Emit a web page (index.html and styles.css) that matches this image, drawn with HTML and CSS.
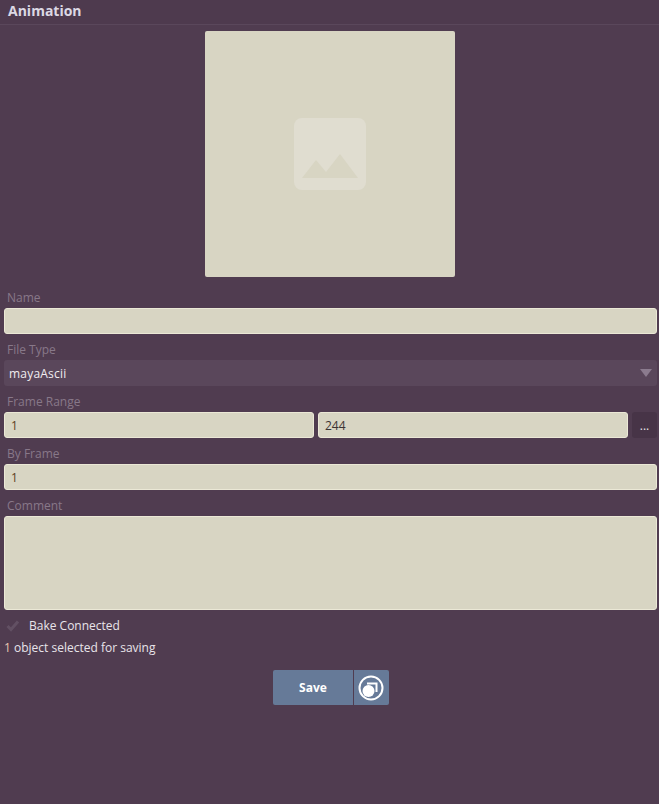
FILE: index.html
```html
<!DOCTYPE html>
<html lang="en">
<head>
<meta charset="utf-8">
<title>Animation</title>
<link rel="stylesheet" href="styles.css">
</head>
<body>
<header class="title-bar"><h1 class="title">Animation</h1></header>
<main class="panel">
  <div class="thumb-wrap">
    <div class="thumb">
      <svg class="thumb-icon" width="72" height="72" viewBox="0 0 72 72" aria-hidden="true">
        <rect width="72" height="72" rx="8" fill="#e0ddd0"/>
        <path d="M8 60 L22 42 L32 54 L46 36 L64 60 Z" fill="#d8d5c3"/>
      </svg>
    </div>
  </div>
  <div class="field">
    <label class="label">Name</label>
    <input class="input" type="text" value="">
  </div>
  <div class="field">
    <label class="label">File Type</label>
    <div class="select"><span class="select-value">mayaAscii</span><span class="caret"></span></div>
  </div>
  <div class="field">
    <label class="label">Frame Range</label>
    <div class="range">
      <input class="input num" type="text" value="1">
      <input class="input" type="text" value="244">
      <button class="more" type="button">...</button>
    </div>
  </div>
  <div class="field">
    <label class="label">By Frame</label>
    <input class="input num" type="text" value="1">
  </div>
  <div class="field">
    <label class="label">Comment</label>
    <textarea class="input area"></textarea>
  </div>
  <div class="check-row">
    <svg class="check" width="14" height="12" viewBox="0 0 14 12" aria-hidden="true">
      <path d="M1.5 6 L5 9.5 L12 1.5" fill="none" stroke="#625063" stroke-width="3"/>
    </svg>
    <span>Bake Connected</span>
  </div>
  <p class="status"><span class="count">1</span> object selected for saving</p>
  <div class="actions">
    <button class="save" type="button">Save</button>
    <button class="target" type="button" aria-label="Selection options">
      <svg width="28" height="28" viewBox="0 0 28 28" aria-hidden="true">
        <circle cx="14" cy="14" r="11.5" fill="none" stroke="#fff" stroke-width="2"/>
        <path d="M10 9.5 H19.5 V18" fill="none" stroke="#fff" stroke-width="2"/>
        <circle cx="11.5" cy="17" r="6" fill="#fff"/>
      </svg>
    </button>
  </div>
</main>
</body>
</html>
```

FILE: styles.css
```css
* { box-sizing: border-box; }
html, body { margin: 0; padding: 0; }
body {
  width: 659px;
  height: 804px;
  overflow: hidden;
  background: #503c50;
  font-family: "Open Sans", sans-serif;
  font-size: 12px;
  color: #e8e4ea;
}
.title-bar {
  height: 25px;
  background: #4e3a4e;
  border-bottom: 1px solid #5a475b;
  padding-left: 8px;
}
.title {
  margin: 0;
  font-size: 14px;
  font-weight: 700;
  line-height: 22px;
  color: #dcd8e4;
}
.panel {
  display: flex;
  flex-direction: column;
  padding: 6px 2px 0 4px;
}
.thumb-wrap {
  display: flex;
  justify-content: center;
  margin-bottom: 13px;
  padding-right: 1px;
}
.thumb {
  width: 250px;
  height: 246px;
  background: #d8d5c3;
  border-radius: 2px;
  display: flex;
  align-items: center;
  justify-content: center;
}
.thumb-icon { display: block; }
.field { display: flex; flex-direction: column; }
.label {
  display: block;
  height: 18px;
  margin-top: 8px;
  padding-left: 3px;
  line-height: 16px;
  color: #887889;
}
.thumb-wrap + .field .label { margin-top: 0; }
.input {
  display: block;
  width: 100%;
  height: 26px;
  padding: 0 6px;
  background: #d8d5c3;
  border: 1px solid #ebe8d6;
  border-radius: 3px;
  font-family: "Open Sans", sans-serif;
  font-size: 12px;
  color: #3c3434;
  outline: none;
}
.num { color: #5e3e22; }
.area { height: 94px; resize: none; }
.select {
  height: 26px;
  display: flex;
  align-items: center;
  justify-content: space-between;
  padding: 0 5px;
  background: #5a475b;
  border-radius: 3px;
  color: #f0ecf0;
}
.select-value { letter-spacing: 0.2px; }
.caret {
  width: 0;
  height: 0;
  border-left: 6px solid transparent;
  border-right: 6px solid transparent;
  border-top: 8px solid #8b7b8e;
}
.range { display: flex; gap: 4px; }
.range .input { flex: 1 1 0; min-width: 0; }
.more {
  flex: 0 0 25px;
  height: 26px;
  padding: 0;
  border: 0;
  border-radius: 3px;
  background: #473447;
  color: #e8e4ea;
  font-family: "Open Sans", sans-serif;
  font-size: 12px;
  font-weight: 400;
}
.check-row {
  display: flex;
  align-items: center;
  height: 16px;
  margin-top: 8px;
  padding-left: 2px;
  gap: 9px;
  line-height: 16px;
}
.status {
  margin: 6px 0 0;
  line-height: 16px;
}
.count { color: #e8c8b0; }
.actions { display: flex; justify-content: center; margin-top: 14px; }
.save, .target {
  height: 35px;
  border: 0;
  background: #667a98;
  color: #fff;
  padding: 0;
  font-family: "Open Sans", sans-serif;
}
.save {
  width: 80px;
  padding-left: 1px;
  border-radius: 2px 0 0 2px;
  font-size: 12px;
  font-weight: 700;
}
.target {
  width: 35px;
  margin-left: 1px;
  border-radius: 0 2px 2px 0;
  display: flex;
  align-items: center;
  justify-content: center;
}
```
